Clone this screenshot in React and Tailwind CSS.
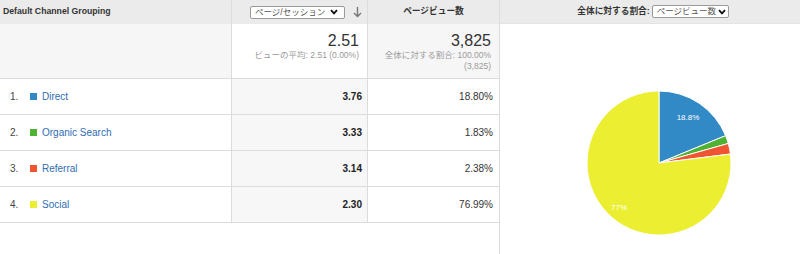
import React from 'react';

const rows = [
  { n: 1, name: 'Direct', color: '#3189c6', pps: '3.76', pct: '18.80%', share: 0.188 },
  { n: 2, name: 'Organic Search', color: '#4fb233', pps: '3.33', pct: '1.83%', share: 0.0183 },
  { n: 3, name: 'Referral', color: '#ee5530', pps: '3.14', pct: '2.38%', share: 0.0238 },
  { n: 4, name: 'Social', color: '#ecef31', pps: '2.30', pct: '76.99%', share: 0.7699 },
];

const font = { fontFamily: '"Liberation Sans", "Noto Sans CJK JP", Arial, sans-serif' };

function Chevron() {
  return (
    <svg width="8" height="6" viewBox="0 0 8 6" className="shrink-0">
      <path d="M1 1.2 L4 4.4 L7 1.2" fill="none" stroke="#111" strokeWidth="1.8" />
    </svg>
  );
}

function Pie() {
  const cx = 159;
  const cy = 139;
  const r = 72;
  let start = -Math.PI / 2;
  const slices = rows.map((row) => {
    const end = start + row.share * Math.PI * 2;
    const x1 = cx + r * Math.cos(start);
    const y1 = cy + r * Math.sin(start);
    const x2 = cx + r * Math.cos(end);
    const y2 = cy + r * Math.sin(end);
    const large = end - start > Math.PI ? 1 : 0;
    const d = `M${cx} ${cy} L${x1} ${y1} A${r} ${r} 0 ${large} 1 ${x2} ${y2} Z`;
    start = end;
    return <path key={row.name} d={d} fill={row.color} stroke="#fff" strokeWidth="1" />;
  });
  return (
    <svg width="300" height="230" viewBox="0 0 300 230">
      {slices}
      <text x="188" y="96" textAnchor="middle" fill="#fff" fontSize="8" style={font}>18.8%</text>
      <text x="119" y="186" textAnchor="middle" fill="#fff" fontSize="8" style={font}>77%</text>
    </svg>
  );
}

export default function App() {
  return (
    <div className="flex h-[254px] w-[800px] overflow-hidden bg-white text-[#333]" style={font}>
      {/* table */}
      <div className="w-[499px] shrink-0">
        <div className="flex h-[24px] bg-[#ebebeb]">
          <div className="flex w-[232px] items-center border-r border-[#dcdcdc] pl-[3px] text-[8.7px] font-bold text-[#333]">
            Default Channel Grouping
          </div>
          <div className="flex w-[136px] items-center justify-end gap-[8px] border-r border-[#dcdcdc] pr-[5px]">
            <div className="flex h-[13px] w-[95px] items-center justify-between rounded-[2px] border border-[#9a9a9a] bg-white pl-[4px] pr-[6px] text-[8.5px] text-[#555]">
              <span>ページ/セッション</span>
              <Chevron />
            </div>
            <svg width="9" height="12" viewBox="0 0 9 12">
              <path d="M4.5 1 V10.5 M1 7 L4.5 10.5 L8 7" fill="none" stroke="#777" strokeWidth="1.4" />
            </svg>
          </div>
          <div className="flex w-[131px] items-center justify-center text-[8.7px] font-bold text-[#333]">
            ページビュー数
          </div>
        </div>

        <div className="flex h-[55px] border-b border-[#dcdcdc]">
          <div className="w-[232px] border-r border-[#dcdcdc] bg-[#f6f6f6]" />
          <div className="w-[136px] border-r border-[#dcdcdc] bg-white pr-[8px] pt-[8px] text-right">
            <div className="text-[16px] leading-[18px] text-[#333]">2.51</div>
            <div className="text-[8.5px] leading-[11px] text-[#9a9a9a]">ビューの平均: 2.51 (0.00%)</div>
          </div>
          <div className="w-[131px] bg-[#f6f6f6] pr-[8px] pt-[8px] text-right">
            <div className="text-[16px] leading-[18px] text-[#333]">3,825</div>
            <div className="text-[8.5px] leading-[11px] text-[#9a9a9a]">全体に対する割合: 100.00%</div>
            <div className="text-[8.5px] leading-[11px] text-[#9a9a9a]">(3,825)</div>
          </div>
        </div>

        {rows.map((row) => (
          <div key={row.n} className="flex h-[36px] border-b border-[#dcdcdc] text-[10px]">
            <div className="flex w-[232px] items-center border-r border-[#dcdcdc] pl-[10px]">
              <span className="w-[20px] text-[#444]">{row.n}.</span>
              <span className="mr-[5px] h-[7px] w-[7px]" style={{ backgroundColor: row.color }} />
              <span className="text-[#2f6db3]">{row.name}</span>
            </div>
            <div className="flex w-[136px] items-center justify-end border-r border-[#dcdcdc] bg-[#f7f7f7] pr-[5px] font-bold text-[#222]">
              {row.pps}
            </div>
            <div className="flex w-[131px] items-center justify-end pr-[6px] text-[#333]">
              {row.pct}
            </div>
          </div>
        ))}
      </div>

      {/* pie panel */}
      <div className="flex w-[301px] flex-col border-l border-[#dcdcdc]">
        <div className="flex h-[24px] items-center justify-center gap-[2px] border-b border-[#e4e4e4] bg-[#ebebeb] pl-[6px]">
          <span className="text-[8.7px] font-bold text-[#333]">全体に対する割合:</span>
          <div className="flex h-[13px] w-[77px] items-center justify-between rounded-[2px] border border-[#9a9a9a] bg-white pl-[4px] pr-[2px] text-[8.5px] text-[#555]">
            <span>ページビュー数</span>
            <Chevron />
          </div>
        </div>
        <Pie />
      </div>
    </div>
  );
}
